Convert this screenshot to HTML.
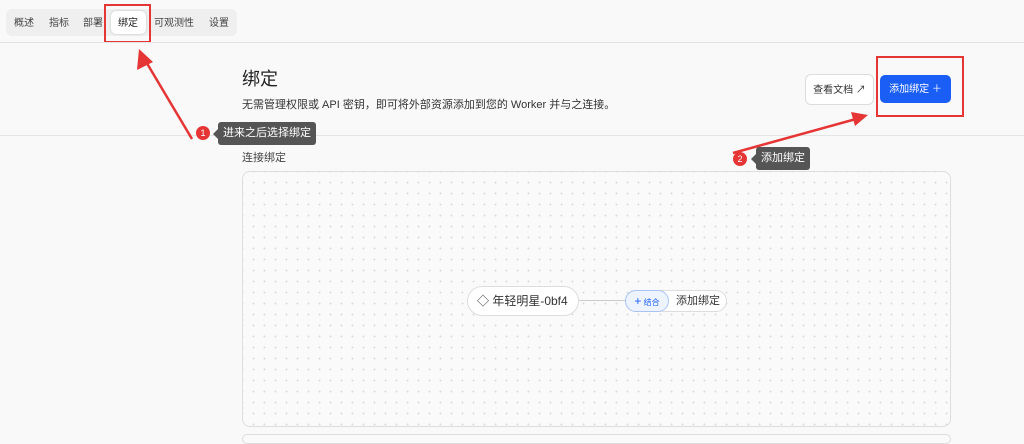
<!DOCTYPE html>
<html><head><meta charset="utf-8"><style>
*{margin:0;padding:0;box-sizing:border-box}
body{width:1024px;height:438px;overflow:hidden;background:#f9f9f9;font-family:"Liberation Sans","Noto Sans CJK SC",sans-serif;color:#222;position:relative}
.a{position:absolute}
.tabs{left:6px;top:9px;width:231px;height:27px;background:#efefef;border-radius:6px}
.tab{font-size:10px;color:#444;top:14px}
.line{left:0;width:1024px;height:1px;background:#e4e4e4}
.canvas{left:242px;top:171px;width:709px;height:256px;border:1px solid #ddd;border-radius:8px;background-color:#fafafa;background-image:radial-gradient(circle,#dcdcdc 0.8px,transparent 1.1px);background-size:11px 11px;background-position:5px 5px}
.tip{background:#555;color:#fff;font-size:11px;border-radius:3px;line-height:23px;padding:0 5px}
.badge{width:14px;height:14px;border-radius:50%;background:#e53535;color:#fff;font-size:9px;text-align:center;line-height:14px}
</style></head><body>
<div class="a tabs"></div>
<div class="a" style="left:111px;top:11px;width:35px;height:23px;background:#fff;border-radius:5px;box-shadow:0 0 2px rgba(0,0,0,.2)"></div>
<div class="a tab" style="left:14px">概述</div>
<div class="a tab" style="left:49px">指标</div>
<div class="a tab" style="left:83px">部署</div>
<div class="a tab" style="left:118px;color:#222">绑定</div>
<div class="a tab" style="left:154px">可观测性</div>
<div class="a tab" style="left:209px">设置</div>
<div class="a" style="left:104px;top:4px;width:47px;height:39px;border:2px solid #e53535"></div>
<div class="a line" style="top:42px"></div>
<div class="a" style="left:242px;top:65px;font-size:18px">绑定</div>
<div class="a" style="left:242px;top:96px;font-size:11px;color:#333">无需管理权限或 API 密钥，即可将外部资源添加到您的 Worker 并与之连接。</div>
<div class="a" style="left:805px;top:74px;width:69px;height:31px;border:1px solid #ddd;border-radius:6px;background:#fff;font-size:10px;line-height:31px;text-align:center;color:#333">查看文档 ↗</div>
<div class="a" style="left:880px;top:75px;width:71px;height:28px;border-radius:5px;background:#1a5ef5;color:#fff;font-size:10px;line-height:30px;text-align:center">添加绑定 ＋</div>
<div class="a" style="left:876px;top:56px;width:88px;height:61px;border:2px solid #e53535"></div>
<div class="a line" style="top:135px"></div>
<div class="a" style="left:242px;top:149px;font-size:11px;color:#444">连接绑定</div>
<div class="a canvas"></div>
<div class="a" style="left:242px;top:434px;width:709px;height:10px;border:1px solid #ddd;border-radius:8px;background:#fafafa"></div>
<div class="a" style="left:578px;top:300px;width:48px;height:1px;background:#ccc"></div>
<div class="a" style="left:467px;top:286px;width:112px;height:30px;border:1px solid #ddd;border-radius:15px;background:#fff;font-size:12px;line-height:28px;padding-left:9px;color:#333">◇ 年轻明星-0bf4</div>
<div class="a" style="left:625px;top:290px;width:102px;height:22px;border:1px solid #ddd;border-radius:11px;background:#fff;font-size:11px;line-height:20px;padding-left:50px;color:#333">添加绑定</div>
<div class="a" style="left:625px;top:290px;width:44px;height:22px;border:1px solid #a8c4f6;border-radius:11px;background:#eef4ff;font-size:8px;line-height:20px;text-align:center;color:#1a5ef5"><span style="font-size:12px">+</span> 结合</div>
<svg class="a" style="left:0;top:0" width="1024" height="438">
<line x1="192" y1="139" x2="145" y2="60" stroke="#e53535" stroke-width="2.5"/>
<polygon points="139,49 137,70 153,62" fill="#e53535"/>
<line x1="733" y1="153" x2="856" y2="119" stroke="#e53535" stroke-width="2.5"/>
<polygon points="868,115 851,112 855,126" fill="#e53535"/>
</svg>
<div class="a badge" style="left:196px;top:126px">1</div>
<div class="a tip" style="left:218px;top:122px">进来之后选择绑定</div>
<div class="a" style="left:213px;top:129px;border:5px solid transparent;border-right-color:#555;border-left:0"></div>
<div class="a badge" style="left:733px;top:152px">2</div>
<div class="a tip" style="left:756px;top:147px">添加绑定</div>
<div class="a" style="left:751px;top:154px;border:5px solid transparent;border-right-color:#555;border-left:0"></div>
</body></html>
